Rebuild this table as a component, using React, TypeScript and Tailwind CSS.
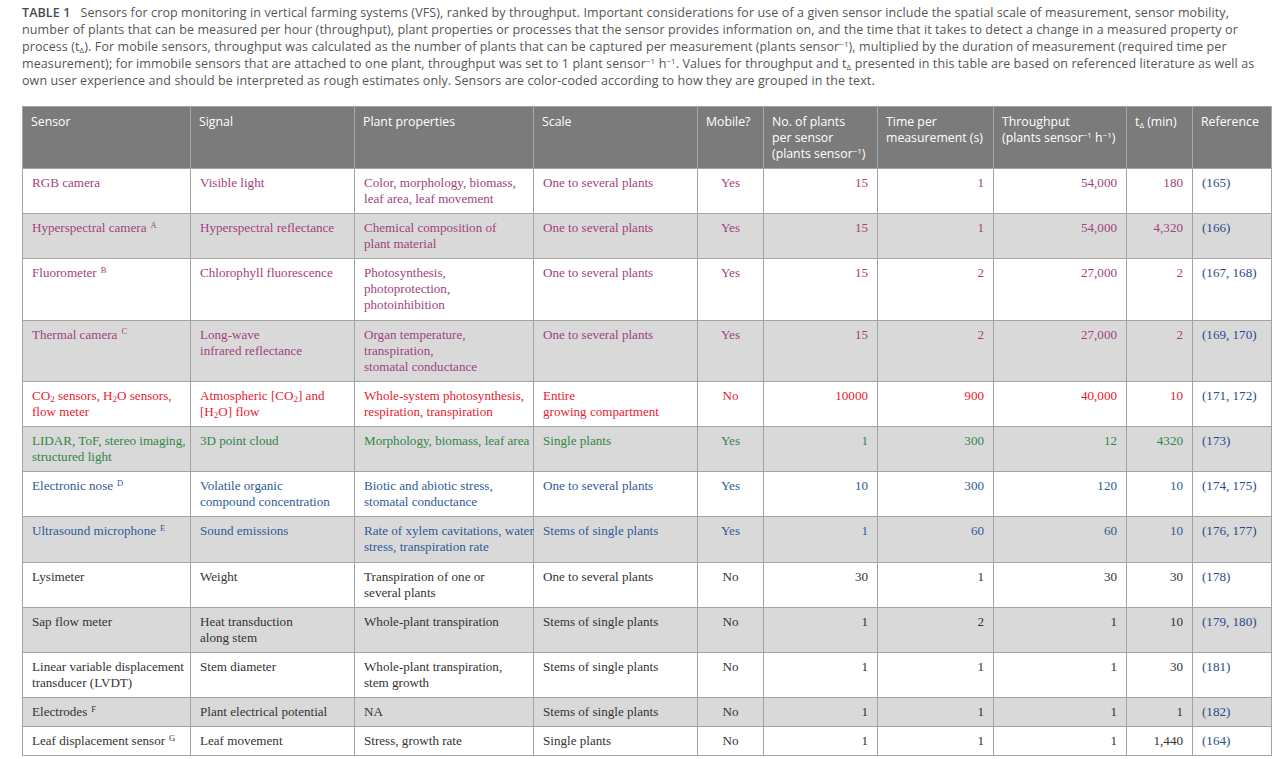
import React from "react";

type Row = {
  color: string;
  gray: boolean;
  sensor: React.ReactNode;
  signal: React.ReactNode;
  props: React.ReactNode;
  scale: React.ReactNode;
  mobile: string;
  n: string;
  time: string;
  thr: string;
  td: string;
  ref: string;
};

const Sup = ({ c }: { c: string }) => (
  <sup className="text-[8.5px] ml-[4px]">{c}</sup>
);
const Sub = ({ c }: { c: string }) => <sub className="text-[9px]">{c}</sub>;

const P = "text-[#a1427f]";
const R = "text-[#e8202f]";
const G = "text-[#2f8747]";
const B = "text-[#2e5a9a]";
const K = "text-[#333333]";

const rows: Row[] = [
  { color: P, gray: false, sensor: "RGB camera", signal: "Visible light", props: <>Color, morphology, biomass,<br />leaf area, leaf movement</>, scale: "One to several plants", mobile: "Yes", n: "15", time: "1", thr: "54,000", td: "180", ref: "(165)" },
  { color: P, gray: true, sensor: <>Hyperspectral camera<Sup c="A" /></>, signal: "Hyperspectral reflectance", props: <>Chemical composition of<br />plant material</>, scale: "One to several plants", mobile: "Yes", n: "15", time: "1", thr: "54,000", td: "4,320", ref: "(166)" },
  { color: P, gray: false, sensor: <>Fluorometer<Sup c="B" /></>, signal: "Chlorophyll fluorescence", props: <>Photosynthesis,<br />photoprotection,<br />photoinhibition</>, scale: "One to several plants", mobile: "Yes", n: "15", time: "2", thr: "27,000", td: "2", ref: "(167, 168)" },
  { color: P, gray: true, sensor: <>Thermal camera<Sup c="C" /></>, signal: <>Long-wave<br />infrared reflectance</>, props: <>Organ temperature,<br />transpiration,<br />stomatal conductance</>, scale: "One to several plants", mobile: "Yes", n: "15", time: "2", thr: "27,000", td: "2", ref: "(169, 170)" },
  { color: R, gray: false, sensor: <>CO<Sub c="2" /> sensors, H<Sub c="2" />O sensors,<br />flow meter</>, signal: <>Atmospheric [CO<Sub c="2" />] and<br />[H<Sub c="2" />O] flow</>, props: <>Whole-system photosynthesis,<br />respiration, transpiration</>, scale: <>Entire<br />growing compartment</>, mobile: "No", n: "10000", time: "900", thr: "40,000", td: "10", ref: "(171, 172)" },
  { color: G, gray: true, sensor: <>LIDAR, ToF, stereo imaging,<br />structured light</>, signal: "3D point cloud", props: "Morphology, biomass, leaf area", scale: "Single plants", mobile: "Yes", n: "1", time: "300", thr: "12", td: "4320", ref: "(173)" },
  { color: B, gray: false, sensor: <>Electronic nose<Sup c="D" /></>, signal: <>Volatile organic<br />compound concentration</>, props: <>Biotic and abiotic stress,<br />stomatal conductance</>, scale: "One to several plants", mobile: "Yes", n: "10", time: "300", thr: "120", td: "10", ref: "(174, 175)" },
  { color: B, gray: true, sensor: <>Ultrasound microphone<Sup c="E" /></>, signal: "Sound emissions", props: <>Rate of xylem cavitations, water<br />stress, transpiration rate</>, scale: "Stems of single plants", mobile: "Yes", n: "1", time: "60", thr: "60", td: "10", ref: "(176, 177)" },
  { color: K, gray: false, sensor: "Lysimeter", signal: "Weight", props: <>Transpiration of one or<br />several plants</>, scale: "One to several plants", mobile: "No", n: "30", time: "1", thr: "30", td: "30", ref: "(178)" },
  { color: K, gray: true, sensor: "Sap flow meter", signal: <>Heat transduction<br />along stem</>, props: "Whole-plant transpiration", scale: "Stems of single plants", mobile: "No", n: "1", time: "2", thr: "1", td: "10", ref: "(179, 180)" },
  { color: K, gray: false, sensor: <>Linear variable displacement<br />transducer (LVDT)</>, signal: "Stem diameter", props: <>Whole-plant transpiration,<br />stem growth</>, scale: "Stems of single plants", mobile: "No", n: "1", time: "1", thr: "1", td: "30", ref: "(181)" },
  { color: K, gray: true, sensor: <>Electrodes<Sup c="F" /></>, signal: "Plant electrical potential", props: "NA", scale: "Stems of single plants", mobile: "No", n: "1", time: "1", thr: "1", td: "1", ref: "(182)" },
  { color: K, gray: false, sensor: <>Leaf displacement sensor<Sup c="G" /></>, signal: "Leaf movement", props: "Stress, growth rate", scale: "Single plants", mobile: "No", n: "1", time: "1", thr: "1", td: "1,440", ref: "(164)" },
];

const th = "border-x border-[#a8a8a8] px-[8px] pt-[7px] pb-[5px] text-left align-top font-normal";
const td = "border border-[#a3a3a3] px-[9px] pt-[6px] pb-[6.2px] align-top whitespace-nowrap";

export default function App() {
  return (
    <div className="w-[1280px] h-[759px] bg-white overflow-hidden" style={{ fontFamily: "'Open Sans', sans-serif" }}>
      <div className="pl-[22px] pt-[4px] text-[12.5px] leading-[17px] text-[#555555] whitespace-nowrap tracking-[0.1px]">
        <div><span className="font-semibold text-[#4a4a4a]">TABLE 1</span>{"\u00a0\u00a0\u00a0"}Sensors for crop monitoring in vertical farming systems (VFS), ranked by throughput. Important considerations for use of a given sensor include the spatial scale of measurement, sensor mobility,</div>
        <div>number of plants that can be measured per hour (throughput), plant properties or processes that the sensor provides information on, and the time that it takes to detect a change in a measured property or</div>
        <div>process (t<sub className="text-[8px]">Δ</sub>). For mobile sensors, throughput was calculated as the number of plants that can be captured per measurement (plants sensor<sup className="text-[8px]">−1</sup>), multiplied by the duration of measurement (required time per</div>
        <div>measurement); for immobile sensors that are attached to one plant, throughput was set to 1 plant sensor<sup className="text-[8px]">−1</sup> h<sup className="text-[8px]">−1</sup>. Values for throughput and t<sub className="text-[8px]">Δ</sub> presented in this table are based on referenced literature as well as</div>
        <div>own user experience and should be interpreted as rough estimates only. Sensors are color-coded according to how they are grouped in the text.</div>
      </div>
      <table className="ml-[22px] mt-[17px] w-[1249px] table-fixed border-collapse border border-[#a3a3a3]">
        <colgroup>
          <col className="w-[168px]" />
          <col className="w-[164px]" />
          <col className="w-[179px]" />
          <col className="w-[164px]" />
          <col className="w-[66px]" />
          <col className="w-[114px]" />
          <col className="w-[116px]" />
          <col className="w-[133px]" />
          <col className="w-[66px]" />
          <col className="w-[79px]" />
        </colgroup>
        <thead>
          <tr className="bg-[#7b7b7b] text-white text-[12.3px] leading-[16px] h-[62px]">
            <th className={th}>Sensor</th>
            <th className={th}>Signal</th>
            <th className={th}>Plant properties</th>
            <th className={th}>Scale</th>
            <th className={th}>Mobile?</th>
            <th className={th}>No. of plants<br />per sensor<br />(plants sensor<sup className="text-[8px]">−1</sup>)</th>
            <th className={th}>Time per<br />measurement (s)</th>
            <th className={th}>Throughput<br />(plants sensor<sup className="text-[8px]">−1</sup> h<sup className="text-[8px]">−1</sup>)</th>
            <th className={th}>t<sub className="text-[8px]">Δ</sub> (min)</th>
            <th className={th}>Reference</th>
          </tr>
        </thead>
        <tbody className="text-[13.1px] leading-[16px]" style={{ fontFamily: "'Liberation Serif', serif" }}>
          {rows.map((r, i) => (
            <tr key={i} className={`${r.gray ? "bg-[#d9d9d9]" : "bg-white"} ${r.color}`}>
              <td className={td}>{r.sensor}</td>
              <td className={td}>{r.signal}</td>
              <td className={td}>{r.props}</td>
              <td className={td}>{r.scale}</td>
              <td className={`${td} text-center`}>{r.mobile}</td>
              <td className={`${td} text-right`}>{r.n}</td>
              <td className={`${td} text-right`}>{r.time}</td>
              <td className={`${td} text-right`}>{r.thr}</td>
              <td className={`${td} text-right`}>{r.td}</td>
              <td className={`${td} text-[#2b4a8b]`}>{r.ref}</td>
            </tr>
          ))}
        </tbody>
      </table>
    </div>
  );
}
